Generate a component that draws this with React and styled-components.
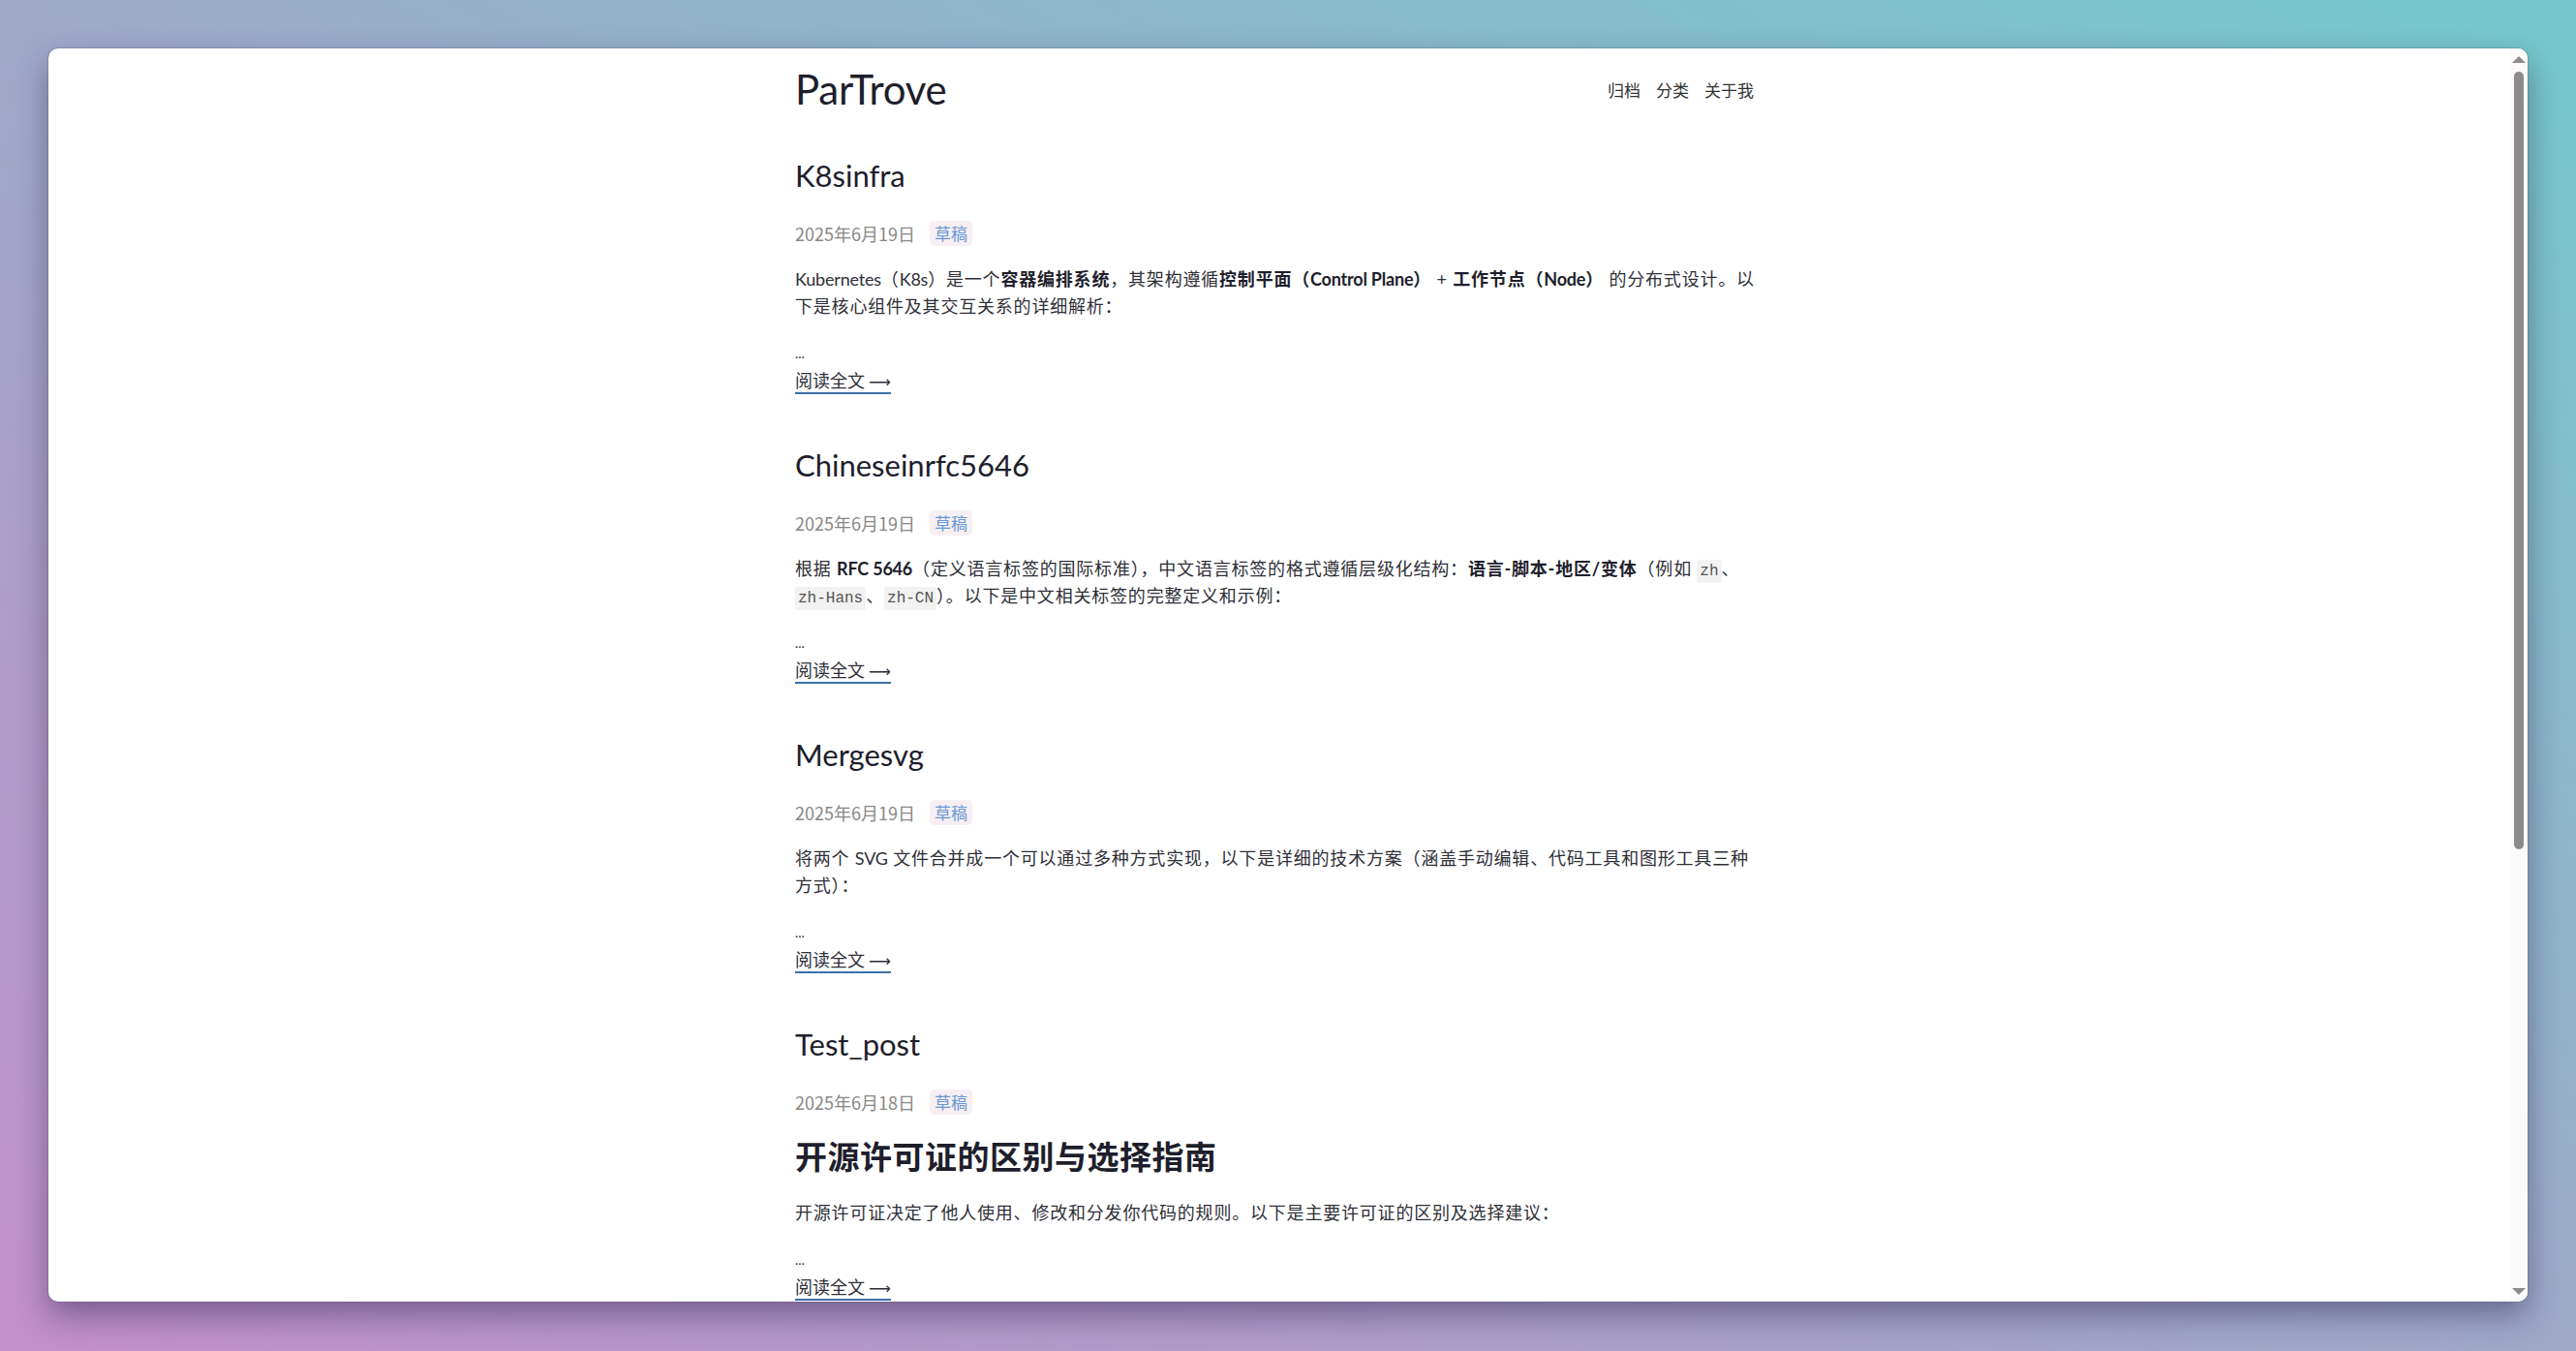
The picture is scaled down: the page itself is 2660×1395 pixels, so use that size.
import React from 'react';
import styled, { createGlobalStyle } from 'styled-components';

const GlobalStyle = createGlobalStyle`
  html, body {
    margin: 0;
    padding: 0;
    height: 100%;
  }
  body {
    background: linear-gradient(to top right, #c190c8 0%, #9eaac8 50%, #74c9cc 100%);
    font-family: Lato, "Noto Sans CJK SC", sans-serif;
    color: #2b2b35;
  }
  #root {
    height: 100%;
  }
`;

const Stage = styled.div`
  box-sizing: border-box;
  height: 100vh;
  padding: 50px 50px 51px;
  display: flex;
`;

const Window = styled.div`
  flex: 1;
  display: flex;
  background: #fff;
  border-radius: 10px;
  overflow: hidden;
  box-shadow: 0 0 0 1px rgba(40, 30, 60, 0.12), 0 14px 32px rgba(40, 28, 70, 0.45);
`;

const Viewport = styled.div`
  flex: 1;
  overflow: hidden;
`;

const ScrollBar = styled.div`
  width: 18px;
  display: flex;
  flex-direction: column;
  align-items: center;
  padding: 8px 0 7px;
  box-sizing: border-box;
  background: #fafafa;
`;

const Arrow = styled.div`
  width: 0;
  height: 0;
  border-left: 7px solid transparent;
  border-right: 7px solid transparent;
  ${({ $down }) =>
    $down ? 'border-top: 7px solid #8c8c8c;' : 'border-bottom: 7px solid #8c8c8c;'}
`;

const Thumb = styled.div`
  width: 10px;
  height: 803px;
  margin-top: 9px;
  border-radius: 5px;
  background: #8c8c8c;
`;

const Spacer = styled.div`
  flex: 1;
`;

const Container = styled.div`
  max-width: 1000px;
  margin: 0 auto;
  padding: 18px 0 60px;
`;

const Header = styled.header`
  display: flex;
  align-items: center;
  justify-content: space-between;
  height: 48px;
  margin-bottom: 45px;
`;

const SiteTitle = styled.a`
  font-family: Lato, "Noto Sans CJK SC", sans-serif;
  font-size: 42px;
  font-weight: 400;
  color: #1e1e2c;
  text-decoration: none;
  letter-spacing: -0.2px;
`;

const Nav = styled.nav`
  display: flex;
  gap: 16px;
  padding-right: 10px;
`;

const NavLink = styled.a`
  font-family: "Noto Sans CJK SC", sans-serif;
  font-size: 17px;
  color: #333;
  text-decoration: none;
`;

const Post = styled.article`
  margin-bottom: 53px;
`;

const PostTitle = styled.h1`
  margin: 0 0 27px;
  font-family: Lato, "Noto Sans CJK SC", sans-serif;
  font-size: 31px;
  line-height: 40px;
  font-weight: 400;
  color: #1e1e2c;
`;

const Meta = styled.div`
  display: flex;
  align-items: center;
  gap: 15px;
  height: 26px;
  margin-bottom: 20px;
`;

const PostDate = styled.time`
  font-family: "Noto Sans CJK SC", sans-serif;
  font-size: 18px;
  color: #888;
`;

const Badge = styled.span`
  font-family: "Noto Sans CJK SC", sans-serif;
  font-size: 17px;
  line-height: 26px;
  padding: 0 5px;
  border-radius: 5px;
  background: #f6eff4;
  color: #6a98d3;
`;

const ExcerptHeading = styled.h2`
  margin: 14px 0 23px;
  font-family: "Noto Sans CJK SC", sans-serif;
  font-size: 33px;
  line-height: 44px;
  letter-spacing: 0.5px;
  font-weight: 700;
  color: #1e1e2c;
`;

const Paragraph = styled.p`
  margin: 0 0 21px;
  font-size: 18px;
  line-height: 28px;
  letter-spacing: 0.8px;
  color: #2f2f38;
  padding-right: 4px;

  strong {
    font-weight: 700;
    color: #1e1e2c;
  }
`;

const Latin = styled.span`
  letter-spacing: -0.2px;
`;

const Code = styled.code`
  font-family: "Liberation Mono", monospace;
  font-size: 16px;
  line-height: 1;
  letter-spacing: 0;
  white-space: nowrap;
  background: #f2f2f2;
  color: #555;
  padding: 3px 3px;
  border-radius: 3px;
`;

const Ellipsis = styled.div`
  font-size: 14px;
  line-height: 28px;
  color: #333;
`;

const ReadMore = styled.a`
  display: inline-block;
  font-family: "Noto Sans CJK SC", sans-serif;
  font-size: 18px;
  line-height: 26px;
  color: #2f2f38;
  text-decoration: none;
  border-bottom: 2px solid #3d6fa8;
`;

const Arrowhead = styled.span`
  font-family: "DejaVu Sans", sans-serif;
  font-size: 16px;
  line-height: 1;
`;

const posts = [
  {
    title: 'K8sinfra',
    date: '2025年6月19日',
    body: (
      <Paragraph>
        <Latin>Kubernetes</Latin>（<Latin>K8s</Latin>）是一个<strong>容器编排系统</strong>，其架构遵循
        <strong>
          控制平面（<Latin>Control Plane</Latin>）
        </strong>{' '}
        + <strong>
          工作节点（<Latin>Node</Latin>）
        </strong>{' '}
        的分布式设计。以下是核心组件及其交互关系的详细解析：
      </Paragraph>
    ),
  },
  {
    title: 'Chineseinrfc5646',
    date: '2025年6月19日',
    body: (
      <Paragraph>
        根据 <strong><Latin>RFC 5646</Latin></strong>（定义语言标签的国际标准），中文语言标签的格式遵循层级化结构：
        <strong>语言-脚本-地区/变体</strong>（例如 <Code>zh</Code>、<Code>zh-Hans</Code>、<Code>zh-CN</Code>）。以下是中文相关标签的完整定义和示例：
      </Paragraph>
    ),
  },
  {
    title: 'Mergesvg',
    date: '2025年6月19日',
    body: (
      <Paragraph>
        将两个 <Latin>SVG</Latin> 文件合并成一个可以通过多种方式实现，以下是详细的技术方案（涵盖手动编辑、代码工具和图形工具三种方式）：
      </Paragraph>
    ),
  },
  {
    title: 'Test_post',
    date: '2025年6月18日',
    body: (
      <>
        <ExcerptHeading>开源许可证的区别与选择指南</ExcerptHeading>
        <Paragraph>开源许可证决定了他人使用、修改和分发你代码的规则。以下是主要许可证的区别及选择建议：</Paragraph>
      </>
    ),
  },
];

function PostItem({ title, date, body }) {
  return (
    <Post>
      <PostTitle>{title}</PostTitle>
      <Meta>
        <PostDate>{date}</PostDate>
        <Badge>草稿</Badge>
      </Meta>
      {body}
      <Ellipsis>...</Ellipsis>
      <ReadMore href="#">
        阅读全文 <Arrowhead>⟶</Arrowhead>
      </ReadMore>
    </Post>
  );
}

export default function App() {
  return (
    <>
      <GlobalStyle />
      <Stage>
        <Window>
          <Viewport>
            <Container>
              <Header>
                <SiteTitle href="#">ParTrove</SiteTitle>
                <Nav>
                  <NavLink href="#">归档</NavLink>
                  <NavLink href="#">分类</NavLink>
                  <NavLink href="#">关于我</NavLink>
                </Nav>
              </Header>
              {posts.map(post => (
                <PostItem key={post.title} {...post} />
              ))}
            </Container>
          </Viewport>
          <ScrollBar>
            <Arrow />
            <Thumb />
            <Spacer />
            <Arrow $down />
          </ScrollBar>
        </Window>
      </Stage>
    </>
  );
}
